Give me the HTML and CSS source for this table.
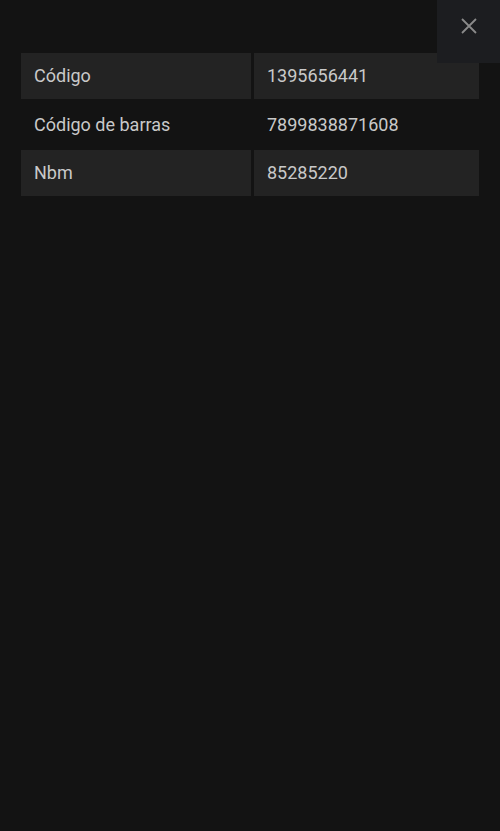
FILE: index.html
```html
<!DOCTYPE html>
<html lang="pt">
<head>
    <meta charset="UTF-8">
    <meta name="viewport" content="width=device-width, initial-scale=1.0">
    <title>Detalhes do produto</title>
    <link rel="stylesheet" href="styles.css">
</head>
<body>
    <button class="close" aria-label="Fechar">
        <svg width="18" height="18" viewBox="0 0 18 18">
            <path d="M2 2 L16 16 M16 2 L2 16" stroke="#8a8a8a" stroke-width="1.8" fill="none"/>
        </svg>
    </button>

    <div class="details">
        <div class="row shaded">
            <div class="cell">Código</div>
            <div class="cell">1395656441</div>
        </div>
        <div class="row">
            <div class="cell">Código de barras</div>
            <div class="cell">7899838871608</div>
        </div>
        <div class="row shaded">
            <div class="cell">Nbm</div>
            <div class="cell">85285220</div>
        </div>
    </div>
</body>
</html>
```

FILE: styles.css
```css
body {
    font-family: Roboto, "Noto Sans", sans-serif;
    margin: 0;
    padding: 53px 0 0 21px;
    background-color: #131313;
    height: 831px;
    box-sizing: border-box;
}

.close {
    position: absolute;
    top: 0;
    right: 0;
    width: 63px;
    height: 63px;
    background: #1c1d20;
    border: none;
    padding: 0;
    display: flex;
    align-items: center;
    justify-content: center;
    padding-bottom: 12px;
    padding-left: 1px;
}

.details {
    display: grid;
    width: 458px;
    row-gap: 3px;
}

.row {
    display: grid;
    grid-template-columns: 230px 225px;
    column-gap: 3px;
}

.cell {
    height: 45.5px;
    line-height: 45px;
    padding-left: 13px;
    font-size: 18px;
    color: #c9c9c9;
}

.shaded .cell {
    background: #232323;
}
```
